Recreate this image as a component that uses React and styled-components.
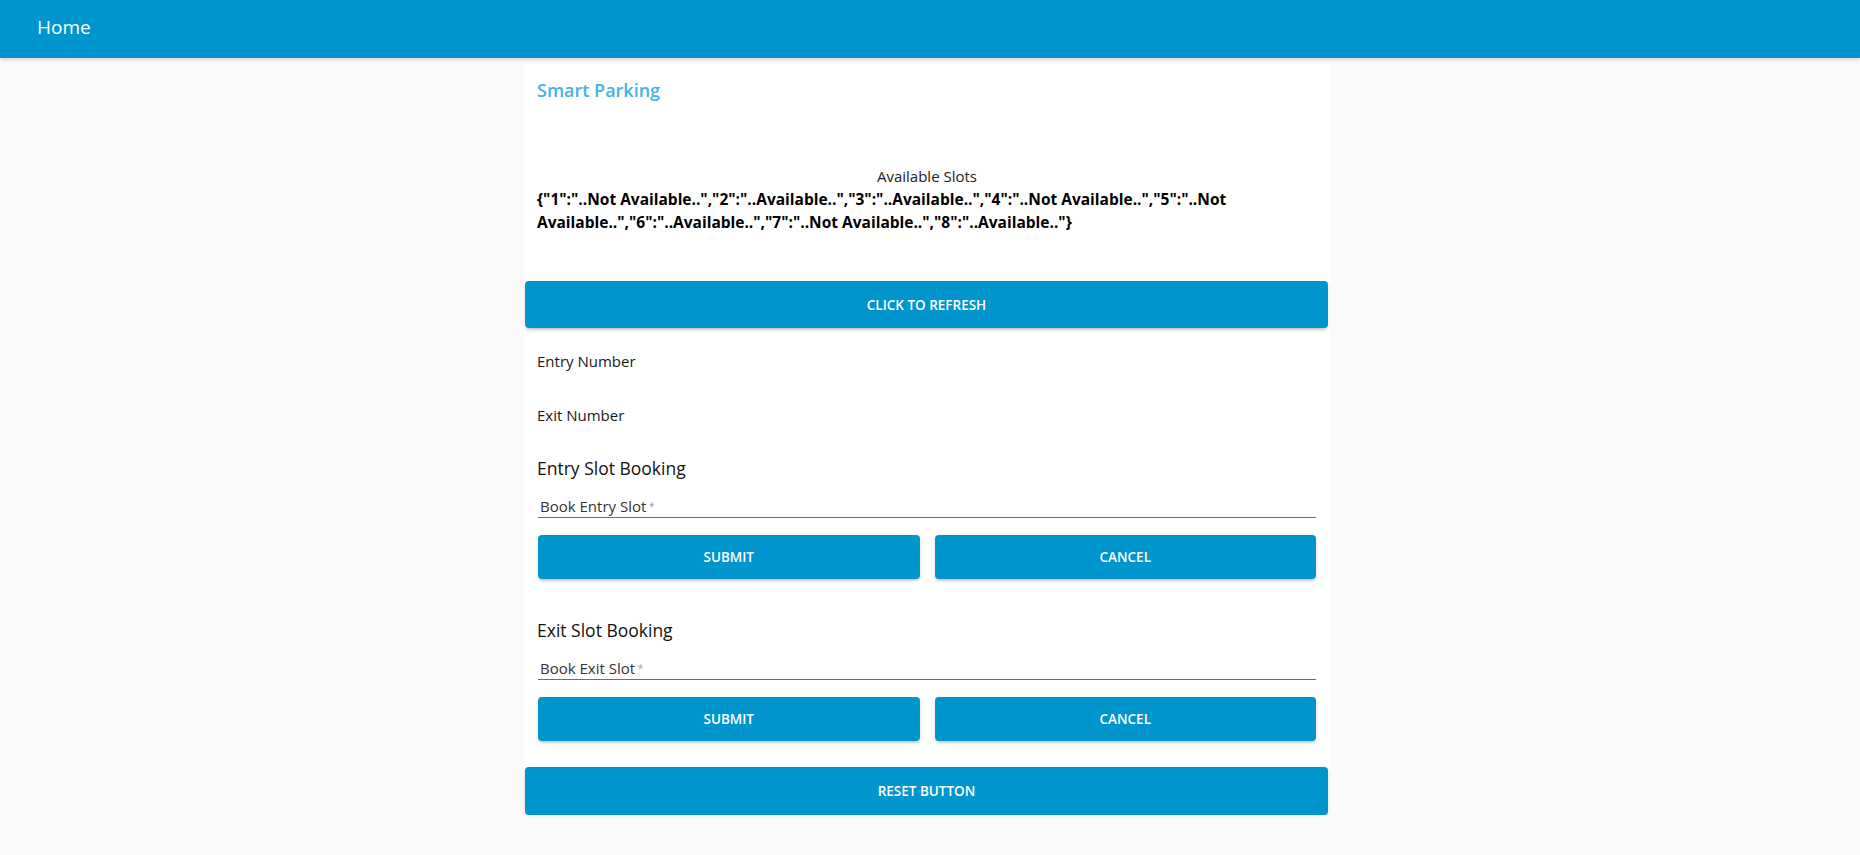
import React from "react";
import styled, { createGlobalStyle } from "styled-components";

const slots = {
    1: "..Not Available..",
    2: "..Available..",
    3: "..Available..",
    4: "..Not Available..",
    5: "..Not Available..",
    6: "..Available..",
    7: "..Not Available..",
    8: "..Available..",
};

const Booking = ({ title, label }) => (
    <Section>
        <SectionTitle>{title}</SectionTitle>
        <Field>
            <FieldLabel>
                {label}
                <Star> *</Star>
            </FieldLabel>
        </Field>
        <ButtonRow>
            <Button>Submit</Button>
            <Button>Cancel</Button>
        </ButtonRow>
    </Section>
);

const App = () => {
    return (
        <>
            <GlobalStyle />
            <AppBar>
                <BarTitle>Home</BarTitle>
            </AppBar>
            <Main>
                <Card>
                    <Title>Smart Parking</Title>
                    <Slots>
                        <SlotsLabel>Available Slots</SlotsLabel>
                        <SlotsData>{JSON.stringify(slots)}</SlotsData>
                    </Slots>
                    <WideButton>Click to Refresh</WideButton>
                    <Info>Entry Number</Info>
                    <Info>Exit Number</Info>
                    <Booking title="Entry Slot Booking" label="Book Entry Slot" />
                    <Booking title="Exit Slot Booking" label="Book Exit Slot" />
                </Card>
                <ResetButton>Reset Button</ResetButton>
            </Main>
        </>
    );
};

const GlobalStyle = createGlobalStyle`
    body {
        margin: 0;
        background: #fafafa;
        font-family: "Open Sans", "Noto Sans", sans-serif;
        color: #1a1a1a;
    }
`;

const AppBar = styled.header`
    height: 58px;
    background: #0095cd;
    display: flex;
    align-items: center;
    padding: 0 37px;
    box-shadow: 0 2px 4px rgba(0, 0, 0, 0.15);
`;

const BarTitle = styled.div`
    color: #fff;
    font-size: 19px;
    margin-top: -4px;
`;

const Main = styled.main`
    width: 806px;
    margin: 6px auto 0;
    transform: translateX(-3px);
`;

const Card = styled.section`
    background: #fff;
    padding: 10px 13px 26px;
`;

const Title = styled.h1`
    margin: 0;
    font-size: 18px;
    font-weight: 600;
    line-height: 32px;
    color: #42b2ea;
`;

const Slots = styled.div`
    padding-top: 59px;
    margin-bottom: 47px;
`;

const SlotsLabel = styled.div`
    text-align: center;
    font-size: 15px;
    line-height: 23px;
    color: #222;
`;

const SlotsData = styled.div`
    font-size: 15.5px;
    font-weight: 700;
    line-height: 23px;
    color: #000;
`;

const Button = styled.button`
    height: 44px;
    border: none;
    border-radius: 4px;
    background: #0095cd;
    color: #fff;
    font-family: inherit;
    font-size: 13.5px;
    font-weight: 600;
    text-transform: uppercase;
    box-shadow: 0 3px 3px -2px rgba(0, 0, 0, 0.2), 0 2px 4px rgba(0, 0, 0, 0.12);
    cursor: pointer;
`;

const WideButton = styled(Button)`
    display: block;
    width: calc(100% + 23px);
    margin: 0 -12px;
    height: 47px;
`;

const ResetButton = styled(Button)`
    display: block;
    width: calc(100% - 3px);
    margin-left: 1px;
    height: 48px;
`;

const Info = styled.div`
    font-size: 15px;
    line-height: 24px;
    margin-top: 21px;

    & + & {
        margin-top: 30px;
    }
`;

const Section = styled.div`
    margin-top: 28px;

    & + & {
        margin-top: 38px;
    }
`;

const SectionTitle = styled.h2`
    margin: 0;
    font-size: 17.5px;
    font-weight: 500;
    line-height: 26px;
    color: #111;
`;

const Field = styled.div`
    margin: 14px 1px 0;
    height: 23px;
    box-sizing: border-box;
    border-bottom: 1px solid #1b8ab8;
    display: flex;
    align-items: flex-end;
    padding: 0 2px 0;
`;

const FieldLabel = styled.span`
    font-size: 15px;
    line-height: 22px;
    color: #333;
`;

const Star = styled.span`
    font-size: 10px;
    vertical-align: top;
    color: #999;
`;

const ButtonRow = styled.div`
    display: grid;
    grid-template-columns: 1fr 1fr;
    gap: 15px;
    margin: 17px 1px 0;
`;

export default App;
